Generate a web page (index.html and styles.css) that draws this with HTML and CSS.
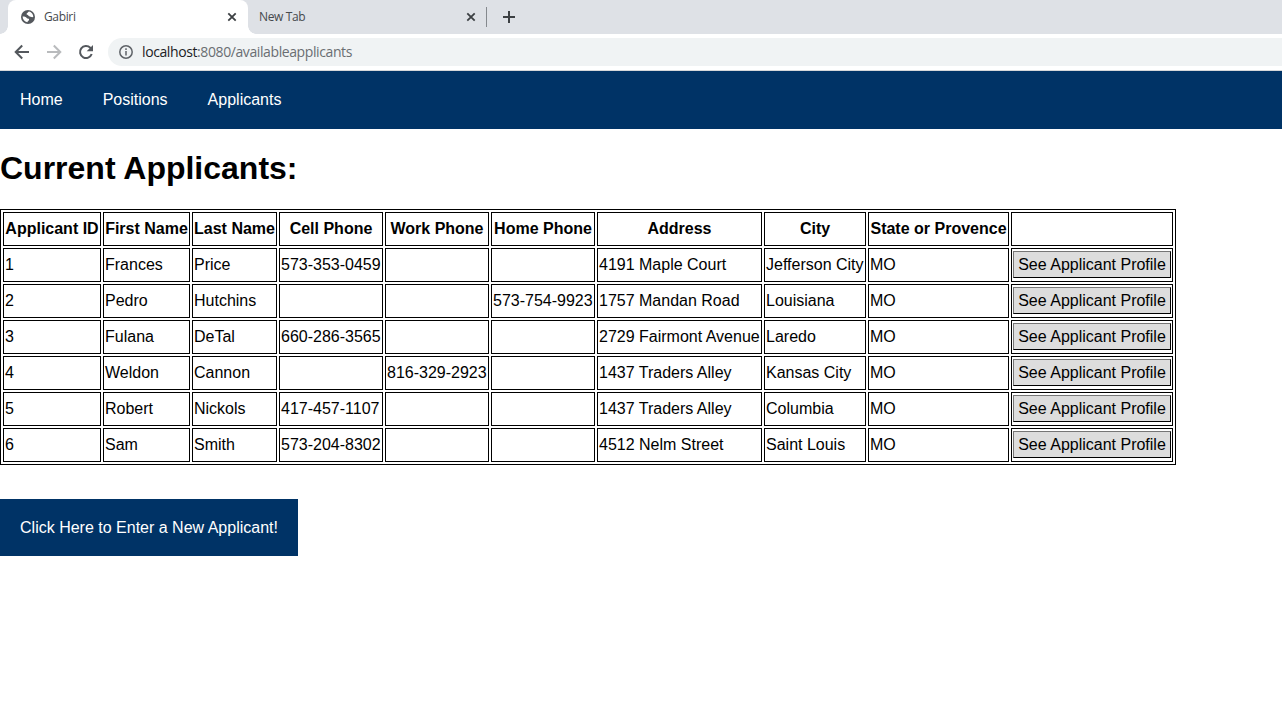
FILE: index.html
```
<!DOCTYPE html>
<html lang="en">
<head>
<meta charset="utf-8">
<title>Gabiri</title>
<link rel="stylesheet" href="styles.css">
</head>
<body>
<div class="tabstrip">
  <div class="tab active">
    <svg class="globe" width="14" height="14" viewBox="0 0 14 14"><circle cx="7" cy="7" r="7" fill="#54585d"/><path d="M8.200 1.600C7 1.600 7 2.800 6 3.300c-.8.500-.5 1.300.3 1.400 1.200.1 1 1.200 1.900 1.600 1 .4 1.800 1 4.100.8C12.300 4.300 10.500 2.200 8.200 1.600zM1.600 6.600c0 3 2 5.300 4.700 5.700.2-1 1-1.200 1.600-2 .5-.8 0-1.600-1-1.700-1.200-.1-1.100-1.400-2.300-1.700-.9-.3-1.800-.3-3-.3z" fill="#fff"/></svg>
    <span class="tab-title">Gabiri</span>
    <svg class="close" width="10" height="10" viewBox="0 0 10 10"><path d="m1.300 1.300 7.400 7.400M8.700 1.300 1.300 8.700"/></svg>
  </div>
  <div class="tab">
    <span class="tab-title">New Tab</span>
    <svg class="close" width="10" height="10" viewBox="0 0 10 10"><path d="m1.300 1.300 7.400 7.400M8.700 1.300 1.300 8.700"/></svg>
  </div>
  <div class="divider"></div>
  <svg class="plus" width="12" height="12" viewBox="0 0 12 12"><path d="M6 0v12M0 6h12"/></svg>
</div>
<div class="toolbar">
  <svg class="tool" width="16" height="16" viewBox="0 0 16 16"><path d="M15 8H2M8.200 1.500 1.700 8l6.500 6.500"/></svg>
  <svg class="tool faded" width="16" height="16" viewBox="0 0 16 16"><path d="M1 8h13M7.800 1.500 14.300 8l-6.500 6.500"/></svg>
  <svg class="tool" width="16" height="16" viewBox="0 0 16 16"><path d="M13.700 10a6 6 0 1 1-1.400-6.200L14 5.500"/><path class="solid" d="M15 1v6.300H8.700z"/></svg>
  <div class="address">
    <svg class="info" width="14" height="14" viewBox="0 0 14 14"><circle cx="7" cy="7" r="6.200"/><path d="M7 6v4.500M7 3.300v1.600"/></svg>
    <span class="url"><b>localhost</b>:8080/availableapplicants</span>
  </div>
</div>
<nav class="nav"><a>Home</a><a>Positions</a><a>Applicants</a></nav>
<main>
  <h1>Current Applicants:</h1>
  <table class="applicants">
    <colgroup><col class="c-id"><col class="c-first"><col class="c-last"><col class="c-phone"><col class="c-phone"><col class="c-phone"><col class="c-address"><col class="c-city"><col class="c-state"><col class="c-action"></colgroup>
    <tr><th>Applicant ID</th><th>First Name</th><th>Last Name</th><th>Cell Phone</th><th>Work Phone</th><th>Home Phone</th><th>Address</th><th>City</th><th>State or Provence</th><th></th></tr>
    <tr><td>1</td><td>Frances</td><td>Price</td><td>573-353-0459</td><td></td><td></td><td>4191 Maple Court</td><td>Jefferson City</td><td>MO</td><td><button class="profile">See Applicant Profile</button></td></tr>
    <tr><td>2</td><td>Pedro</td><td>Hutchins</td><td></td><td></td><td>573-754-9923</td><td>1757 Mandan Road</td><td>Louisiana</td><td>MO</td><td><button class="profile">See Applicant Profile</button></td></tr>
    <tr><td>3</td><td>Fulana</td><td>DeTal</td><td>660-286-3565</td><td></td><td></td><td>2729 Fairmont Avenue</td><td>Laredo</td><td>MO</td><td><button class="profile">See Applicant Profile</button></td></tr>
    <tr><td>4</td><td>Weldon</td><td>Cannon</td><td></td><td>816-329-2923</td><td></td><td>1437 Traders Alley</td><td>Kansas City</td><td>MO</td><td><button class="profile">See Applicant Profile</button></td></tr>
    <tr><td>5</td><td>Robert</td><td>Nickols</td><td>417-457-1107</td><td></td><td></td><td>1437 Traders Alley</td><td>Columbia</td><td>MO</td><td><button class="profile">See Applicant Profile</button></td></tr>
    <tr><td>6</td><td>Sam</td><td>Smith</td><td>573-204-8302</td><td></td><td></td><td>4512 Nelm Street</td><td>Saint Louis</td><td>MO</td><td><button class="profile">See Applicant Profile</button></td></tr>
  </table>
  <button class="new-applicant">Click Here to Enter a New Applicant!</button>
</main>
</body>
</html>
```
FILE: styles.css
```
* { box-sizing: border-box; }
body { margin: 0; background: #fff; color: #000; font: 16px/18px "Liberation Sans", Arial, sans-serif; }
svg { flex: none; display: block; }

.tabstrip { display: flex; align-items: center; height: 34px; padding-left: 8px; background: #dee1e6; font: 12px/16px "Open Sans", sans-serif; color: #45494d; }
.tab { display: flex; align-items: center; height: 34px; width: 239px; padding: 0 11px; }
.tab.active { position: relative; width: 240px; padding: 0 11px 0 13px; background: #fff; border-radius: 8px 8px 0 0; }
.tab.active::before, .tab.active::after { content: ""; position: absolute; bottom: 0; width: 8px; height: 8px; }
.tab.active::before { left: -8px; background: radial-gradient(circle at 0 0, #dee1e6 7.500px, #fff 8px); }
.tab.active::after { right: -8px; background: radial-gradient(circle at 100% 0, #dee1e6 7.500px, #fff 8px); }
.globe { margin-right: 9px; }
.tab-title { flex: 1; letter-spacing: -0.35px; }
.close { fill: none; stroke: #3c4043; stroke-width: 1.800; }
.divider { width: 1px; height: 20px; margin-left: -1px; background: #85898e; }
.plus { margin-left: 16px; fill: none; stroke: #3c4043; stroke-width: 2; }

.toolbar { display: flex; align-items: center; height: 37px; padding: 0 0 1px 14px; border-bottom: 1px solid #d5d7d9; background: #fff; }
.tool { margin-right: 16px; fill: none; stroke: #54585d; stroke-width: 2; }
.tool.faded { stroke: #b9bbbd; }
.tool + .address { margin-left: -2px; }
.tool .solid { fill: #54585d; stroke: none; }
.address { display: flex; align-items: center; flex: 1; height: 28px; padding-left: 11px; border-radius: 14px 0 0 14px; background: #f0f3f4; }
.info { margin-right: 9px; fill: none; stroke: #5f6368; stroke-width: 1.500; }
.url { font: 14px/20px "Open Sans", sans-serif; letter-spacing: -0.4px; color: #6a6e72; }
.url b { font-weight: 400; color: #202124; }

.nav { display: flex; height: 58px; padding: 20px; gap: 40px; background: #003366; color: #fff; }
h1 { margin: 0; padding: 20px 0 22px; font-size: 32px; line-height: 38px; }
.applicants { table-layout: fixed; width: 1176px; border: 1px solid #000; border-spacing: 2px; white-space: nowrap; }
.applicants th, .applicants td { height: 34px; padding: 1px; border: 1px solid #000; vertical-align: middle; }
.c-id { width: 98px; }
.c-first { width: 87px; }
.c-last { width: 85px; }
.c-phone { width: 104px; }
.c-address { width: 165px; }
.c-city { width: 102px; }
.c-state { width: 141px; }
.c-action { width: 162px; }
.profile { display: block; width: 158px; height: 27px; margin-bottom: 1px; padding: 1px 0 0; border: 1px solid; border-color: #767676 #000 #000 #767676; background: #ddd; color: #000; font: inherit; }
.new-applicant { display: block; width: 298px; height: 57px; margin-top: 34px; padding: 0; border: 0; background: #003366; color: #fff; font: inherit; }
```
